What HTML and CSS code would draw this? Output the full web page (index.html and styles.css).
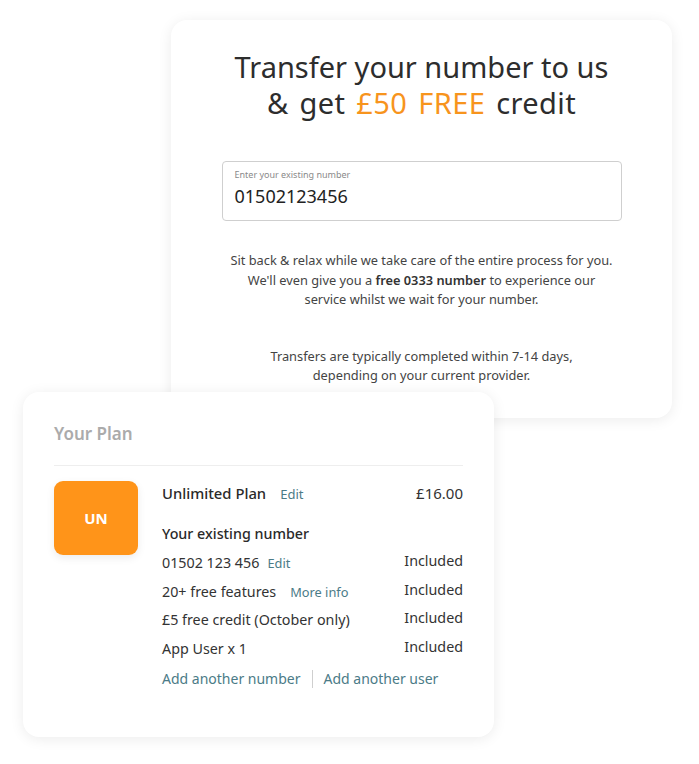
FILE: index.html
```html
<!DOCTYPE html>
<html>
<head>
<meta charset="utf-8">
<link rel="stylesheet" href="styles.css">
</head>
<body>
<div class="page">
  <section class="card transfer">
    <h1 class="title">Transfer your number to us<br><span class="line2">&amp; get <span class="accent">£50 FREE</span> credit</span></h1>
    <div class="field">
      <div class="field-label">Enter your existing number</div>
      <div class="field-value">01502123456</div>
    </div>
    <p class="copy">Sit back &amp; relax while we take care of the entire process for you.<br>We'll even give you a <b>free 0333 number</b> to experience our<br>service whilst we wait for your number.</p>
    <p class="copy note">Transfers are typically completed within 7-14 days,<br>depending on your current provider.</p>
  </section>
  <section class="card plan">
    <h2 class="plan-title">Your Plan</h2>
    <div class="plan-body">
      <div class="badge">UN</div>
      <div class="details">
        <div class="row head">
          <div class="left"><span class="name">Unlimited Plan</span><a class="link edit-lg">Edit</a></div>
          <div class="price">£16.00</div>
        </div>
        <div class="subhead">Your existing number</div>
        <div class="row item">
          <div class="left">01502 123 456<a class="link small">Edit</a></div>
          <div class="inc">Included</div>
        </div>
        <div class="row item">
          <div class="left">20+ free features<a class="link small more">More info</a></div>
          <div class="inc">Included</div>
        </div>
        <div class="row item">
          <div class="left">£5 free credit (October only)</div>
          <div class="inc">Included</div>
        </div>
        <div class="row item">
          <div class="left">App User x 1</div>
          <div class="inc">Included</div>
        </div>
        <div class="actions">
          <a class="link">Add another number</a>
          <span class="sep"></span>
          <a class="link">Add another user</a>
        </div>
      </div>
    </div>
  </section>
</div>
</body>
</html>
```
FILE: styles.css
```css
* { box-sizing: border-box; }
html, body { margin: 0; padding: 0; background: #fff; }
body {
  font-family: "Noto Sans", "Open Sans", sans-serif;
  color: #333;
}
.page {
  width: 699px;
  height: 764px;
  padding-top: 20px;
  overflow: hidden;
}
.card {
  background: #fff;
  border-radius: 16px;
  box-shadow: 0 2px 14px rgba(0,0,0,0.08);
}
.transfer {
  margin-left: 171px;
  width: 501px;
  height: 398px;
  padding-top: 29px;
  display: flex;
  flex-direction: column;
  align-items: center;
}
.title {
  margin: 0;
  font-weight: 400;
  font-size: 29px;
  line-height: 36px;
  text-align: center;
  color: #2d2d2d;
}
.line2 { word-spacing: 3px; letter-spacing: 0.4px; }
.accent { color: #f7941d; }
.field {
  margin-top: 40px;
  width: 400px;
  height: 60px;
  border: 1px solid #cfcfcf;
  border-radius: 4px;
  padding: 7px 12px 0;
}
.field-label {
  font-size: 9px;
  line-height: 12px;
  color: #8a8a8a;
}
.field-value {
  margin-top: 3px;
  font-size: 18px;
  line-height: 24px;
  color: #222;
}
.copy {
  margin: 30px 0 0;
  font-size: 12.8px;
  line-height: 19.5px;
  text-align: center;
  color: #444;
}
.copy b { font-weight: 600; color: #333; }
.copy.note { margin-top: 37px; }

.plan {
  position: relative;
  margin-top: -26px;
  margin-left: 23px;
  width: 471px;
  height: 345px;
  padding: 30px 31px 0;
}
.plan-title {
  margin: 0;
  font-size: 17px;
  line-height: 24px;
  font-weight: 600;
  color: #ababab;
  padding-bottom: 19px;
  border-bottom: 1px solid #eeeeee;
}
.plan-body {
  display: flex;
  margin-top: 15px;
}
.badge {
  flex: none;
  width: 84px;
  height: 74px;
  border-radius: 9px;
  background: #ff9419;
  color: #fff;
  font-weight: 700;
  font-size: 15px;
  display: flex;
  align-items: center;
  justify-content: center;
  box-shadow: 0 3px 8px rgba(0,0,0,0.08);
}
.details {
  flex: 1;
  margin-left: 24px;
  font-size: 14.3px;
  color: #333;
}
.row {
  display: flex;
  justify-content: space-between;
  align-items: flex-start;
}
.row.head { height: 30px; padding-top: 2px; font-size: 14.8px; line-height: 20px; }
.name { font-weight: 500; color: #2a2a2a; }
.link { color: #4b7b87; text-decoration: none; }
.edit-lg { margin-left: 14px; font-size: 13px; }
.price { font-size: 15px; color: #333; }
.subhead {
  margin-top: 13px;
  font-weight: 500;
  line-height: 20px;
  color: #2a2a2a;
}
.item { line-height: 20px; margin-top: 8.8px; }
.item .inc { margin-top: -2px; }
.item .small { font-size: 12.8px; margin-left: 8px; }
.item .more { margin-left: 14px; }
.actions {
  display: flex;
  align-items: center;
  margin-top: 9.5px;
  line-height: 20px;
}
.actions .link { font-size: 14px; }
.sep {
  display: inline-block;
  width: 1px;
  height: 18px;
  background: #cfcfcf;
  margin: 0 11px;
}
```
